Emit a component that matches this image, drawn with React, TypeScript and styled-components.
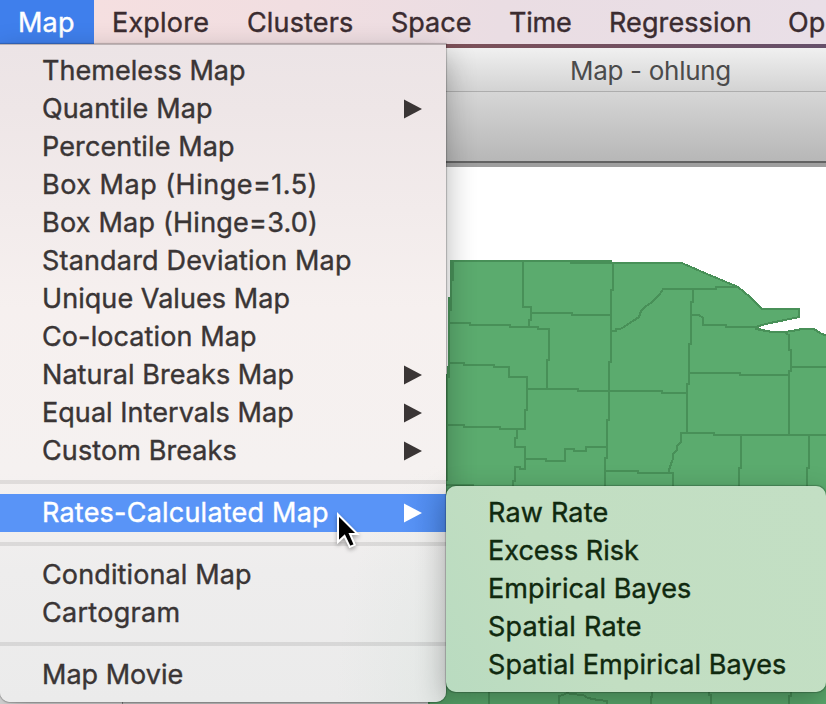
import React from "react";
import styled, { createGlobalStyle } from "styled-components";

const GlobalStyle = createGlobalStyle`
  * { box-sizing: border-box; }
  body { margin: 0; overflow: hidden; font-family: Inter, "Liberation Sans", sans-serif; }
`;

const Screen = styled.div`
  position: relative;
  display: flex;
  flex-direction: column;
  width: 826px;
  height: 704px;
  overflow: hidden;
  background: linear-gradient(90deg, #7d5058 440px, #66506a);
`;

const MenuBar = styled.nav`
  display: flex;
  flex: none;
  height: 44px;
  background: linear-gradient(90deg, #f5dfe0 94px, #f1dee1 300px, #eadde3 500px, #e9dfe7);
`;

const BarItem = styled.div<{ $width: number; $tracking: number; $active?: boolean }>`
  flex: none;
  width: ${(p) => p.$width}px;
  padding-left: 18px;
  font-size: 27px;
  line-height: 45px;
  letter-spacing: ${(p) => p.$tracking}px;
  white-space: nowrap;
  -webkit-text-stroke: 0.4px currentColor;
  color: ${(p) => (p.$active ? "#fff" : "#3b2c30")};
  background: ${(p) => (p.$active ? "#3f7fec" : "transparent")};
`;

const Window = styled.main`
  display: flex;
  flex: 1;
  flex-direction: column;
  margin-top: 4px;
  background: #fff;
`;

const TitleBar = styled.header`
  flex: none;
  height: 44px;
  padding-left: 570px;
  border-bottom: 1px solid #adadad;
  background: linear-gradient(#f0f0f0, #d3d3d3);
  font-size: 26px;
  line-height: 46px;
  letter-spacing: -0.3px;
  white-space: nowrap;
  color: #4b4b4b;
`;

const Toolbar = styled.div`
  flex: none;
  height: 75px;
  border-bottom: 4px solid #9f9f9f;
  background: linear-gradient(#d6d6d6, #b7b7b7 69px, #636363 69px);
`;

const Canvas = styled.section`
  display: flex;
  flex: 1;
  min-height: 0;
`;

const MapDrawing = styled.svg`
  display: block;
  width: 826px;
  height: 537px;
`;

const menuEdge = "0 0 1px 1px rgba(0, 0, 0, 0.22), 0 10px 30px rgba(0, 0, 0, 0.3)";

const Menu = styled.div`
  position: absolute;
  top: 44px;
  left: 0;
  width: 446px;
  height: 658px;
  padding-top: 7px;
  border-top: 1px solid #bcb3b5;
  border-radius: 0 0 10px 10px;
  background:
    radial-gradient(ellipse 110px 240px at 100% 100%, rgba(215, 226, 220, 0.4), transparent),
    linear-gradient(#ece4e6, #eee6e7 10%, #f6f0ef 40%, #f5f1f0 65%, #eeeded 80%, #ebebeb);
  box-shadow: ${menuEdge};
`;

const Submenu = styled.div`
  position: absolute;
  top: 486px;
  left: 446px;
  width: 380px;
  height: 206px;
  padding: 8px 0;
  border-radius: 10px;
  background: linear-gradient(60deg, #b9dbc0, #c2dec2 35%, #c3dfc4);
  box-shadow: ${menuEdge};
`;

const Row = styled.div<{ $tracking: number; $selected?: boolean; $tone?: string }>`
  display: flex;
  align-items: center;
  justify-content: space-between;
  height: 38px;
  padding: 0 24px 0 42px;
  font-size: 27px;
  line-height: 38px;
  letter-spacing: ${(p) => p.$tracking}px;
  white-space: nowrap;
  -webkit-text-stroke: 0.4px currentColor;
  color: ${(p) => (p.$selected ? "#fff" : p.$tone ?? "#3a3535")};
  background: ${(p) => (p.$selected ? "linear-gradient(90deg, #5994f7 90%, #4c87e8)" : "transparent")};
`;

const Separator = styled.div`
  height: 4px;
  margin: 10px 0;
  background: rgba(0, 0, 0, 0.085);
`;

const Arrow = styled.svg`
  display: block;
  width: 18px;
  height: 20px;
  margin-bottom: 1px;
  fill: currentColor;
`;

const Pointer = styled.svg`
  position: absolute;
  top: 508px;
  left: 330px;
  width: 34px;
  height: 46px;
  filter: drop-shadow(0 2px 2px rgba(0, 0, 0, 0.35));
`;

const barItems = [
  { label: "Map", width: 94, tracking: 0.2, active: true },
  { label: "Explore", width: 135, tracking: 0.2 },
  { label: "Clusters", width: 144, tracking: 0.15 },
  { label: "Space", width: 118, tracking: 0 },
  { label: "Time", width: 100, tracking: -0.2 },
  { label: "Regression", width: 179, tracking: 0.1 },
  { label: "Op", width: 56, tracking: 0 },
];

type Entry = { label: string; tracking: number; sub?: boolean; selected?: boolean };

const groups: Entry[][] = [
  [
    { label: "Themeless Map", tracking: 0.05 },
    { label: "Quantile Map", tracking: 0.13, sub: true },
    { label: "Percentile Map", tracking: 0.12 },
    { label: "Box Map (Hinge=1.5)", tracking: 0.5 },
    { label: "Box Map (Hinge=3.0)", tracking: 0.22 },
    { label: "Standard Deviation Map", tracking: 0.18 },
    { label: "Unique Values Map", tracking: 0.06 },
    { label: "Co-location Map", tracking: 0.1 },
    { label: "Natural Breaks Map", tracking: 0.06, sub: true },
    { label: "Equal Intervals Map", tracking: 0.05, sub: true },
    { label: "Custom Breaks", tracking: 0.1, sub: true },
  ],
  [{ label: "Rates-Calculated Map", tracking: 0.22, sub: true, selected: true }],
  [
    { label: "Conditional Map", tracking: 0.12 },
    { label: "Cartogram", tracking: 0.3 },
  ],
  [{ label: "Map Movie", tracking: 0 }],
];

const rateEntries: Entry[] = [
  { label: "Raw Rate", tracking: 0.2 },
  { label: "Excess Risk", tracking: 0.02 },
  { label: "Empirical Bayes", tracking: 0.08 },
  { label: "Spatial Rate", tracking: 0.25 },
  { label: "Spatial Empirical Bayes", tracking: 0.1 },
];

const outline =
  "M451 261H571V263H682L684 264L707 274L738 287L750 297L762 309H799V317L785 320L770 323L755 327L762 330L772 332L784 332L792 331L802 329H814L820 333L827 336V705H429V490L447 480V378L449 362V298L451 298Z";

const borders = [
  "M571 261H612",
  "M453 261V280H451V310H449V377H447V410",
  "M523 261V307H531V320H529V327",
  "M531 313H572V315H611",
  "M450 323H470V325H510V327H538V329H549V360H547V389",
  "M450 363H464V365H494V367H509V377H527V410H525V429H500V427H464V425H447",
  "M527 389H578V391H662V393H687",
  "M613 262V290H611V362H609V420H607V458H605V486",
  "M612 331H616V329H620L624 327L628 324L633 321L639 317L641 311L645 307L652 302L660 294L663 289H716V287H738",
  "M693 289V302H691V344H689V384H687V432",
  "M692 315H699L703 318V325H726V327H755",
  "M755 329L772 332H784L789 335V350H791V371H789V434",
  "M689 373H740V375H789",
  "M791 367H827",
  "M687 433H714V435H827",
  "M687 433H681V442L677 446V450L673 454V459L671 464L669 470V472",
  "M605 471H638V473H673V486",
  "M741 435V468H739V486",
  "M809 435V468H807V486",
  "M517 429V438H515V447H525V469H520V467H515V481H513V486",
  "M525 459H546V461H565V449H574V451H586V447H606",
  "M446 485H474",
  "M489 690V704",
  "M559 704V696L563 695L567 693L571 694L583 695L588 698L598 700L607 701V704",
  "M652 690V697H651V704",
  "M709 690V695H711V704",
  "M791 690V696H789V704",
];

const SubArrow = () => (
  <Arrow viewBox="0 0 18 20">
    <path d="M0 .5V19.5L18 10Z" />
  </Arrow>
);

export default function App() {
  return (
    <Screen>
      <GlobalStyle />
      <MenuBar>
        {barItems.map((b) => (
          <BarItem key={b.label} $width={b.width} $tracking={b.tracking} $active={b.active}>
            {b.label}
          </BarItem>
        ))}
      </MenuBar>
      <Window>
        <TitleBar>Map - ohlung</TitleBar>
        <Toolbar />
        <Canvas>
          <MapDrawing viewBox="0 167 826 537" shapeRendering="crispEdges">
            <path d="M0 167H428V704H0Z" fill="#d9d9d9" />
            <path d="M0 690H122V704H0Z" fill="#e6e6e6" />
            <path d="M122 690V704" stroke="#8c8c8c" />
            <path d={outline} fill="#5bab6e" stroke="#489058" strokeWidth="2" />
            <g fill="none" stroke="#489058" strokeWidth="2">
              {borders.map((d) => (
                <path key={d} d={d} />
              ))}
            </g>
          </MapDrawing>
        </Canvas>
      </Window>
      <Menu>
        {groups.map((group, i) => (
          <React.Fragment key={i}>
            {i > 0 && <Separator />}
            {group.map((e) => (
              <Row key={e.label} $tracking={e.tracking} $selected={e.selected}>
                {e.label}
                {e.sub && <SubArrow />}
              </Row>
            ))}
          </React.Fragment>
        ))}
      </Menu>
      <Submenu>
        {rateEntries.map((e) => (
          <Row key={e.label} $tracking={e.tracking} $tone="#10290f">
            {e.label}
          </Row>
        ))}
      </Submenu>
      <Pointer viewBox="330 508 34 46">
        <path
          d="M338 514.5V542L344.5 536L349.8 547L354.8 544.8L350 534H357.5Z"
          fill="#000"
          stroke="#fff"
          strokeWidth="2"
        />
      </Pointer>
    </Screen>
  );
}
